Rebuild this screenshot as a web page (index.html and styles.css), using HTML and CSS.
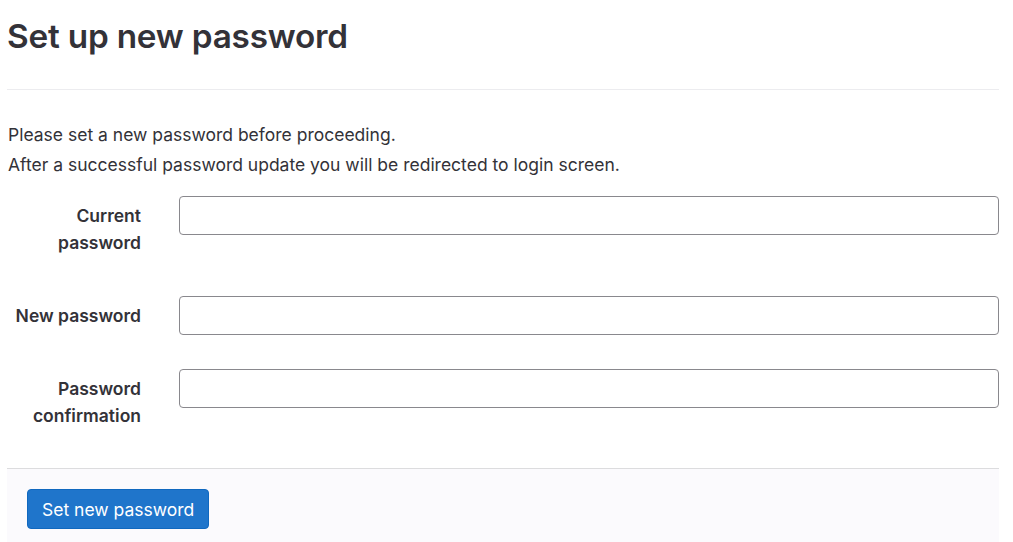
FILE: index.html
```html
<!DOCTYPE html>
<html>
<head>
<meta charset="utf-8">
<link rel="stylesheet" href="styles.css">
</head>
<body>
<div class="page">
  <h1 class="title">Set up new password</h1>
  <hr class="sep">
  <p class="intro">Please set a new password before proceeding.</p>
  <p class="intro">After a successful password update you will be redirected to login screen.</p>
  <form class="form">
    <div class="row">
      <label class="label">Current<br>password</label>
      <input class="input" type="password">
    </div>
    <div class="row">
      <label class="label">New password</label>
      <input class="input" type="password">
    </div>
    <div class="row">
      <label class="label">Password<br>confirmation</label>
      <input class="input" type="password">
    </div>
    <div class="footer">
      <button class="btn" type="button">Set new password</button>
    </div>
  </form>
</div>
</body>
</html>
```
FILE: styles.css
```css
html, body {
  margin: 0;
  padding: 0;
  background: #fff;
}
body {
  font-family: Inter, "Noto Sans", sans-serif;
  color: #333238;
}
.page {
  width: 992px;
  margin-left: 7px;
}
.title {
  margin: 0;
  padding-top: 15px;
  font-size: 33.3px;
  font-weight: 600;
  line-height: 42px;
  color: #333238;
  letter-spacing: -0.2px;
}
.sep {
  border: 0;
  border-top: 1px solid #ececef;
  margin: 32px 0 0 0;
}
.intro {
  margin: 0;
  font-size: 17.5px;
  line-height: 30px;
  padding-left: 1px;
}
.sep + .intro {
  margin-top: 30px;
}
.form {
  margin-top: 15px;
}
.row {
  display: flex;
  align-items: flex-start;
  margin-bottom: 32px;
}
.label {
  width: 134px;
  flex: none;
  text-align: right;
  font-weight: 600;
  font-size: 17.5px;
  line-height: 27px;
  padding: 7px 0 7px 0;
  margin-right: 38px;
  color: #333238;
}
.input {
  flex: 1;
  height: 39px;
  box-sizing: border-box;
  border: 1px solid #89888d;
  border-radius: 4px;
  margin: 1px 0 0 0;
  padding: 0 12px;
  font-size: 16px;
  background: #fff;
}
.footer {
  border-top: 1px solid #dcdcde;
  background: #fbfafd;
  padding: 20px 20px 20px 20px;
  margin-top: 0;
}
.btn {
  font-family: Inter, "Noto Sans", sans-serif;
  font-size: 17.5px;
  color: #fff;
  background: #1f75cb;
  border: 1px solid #1068bf;
  border-radius: 4px;
  height: 40px;
  padding: 0 14px;
}
```
